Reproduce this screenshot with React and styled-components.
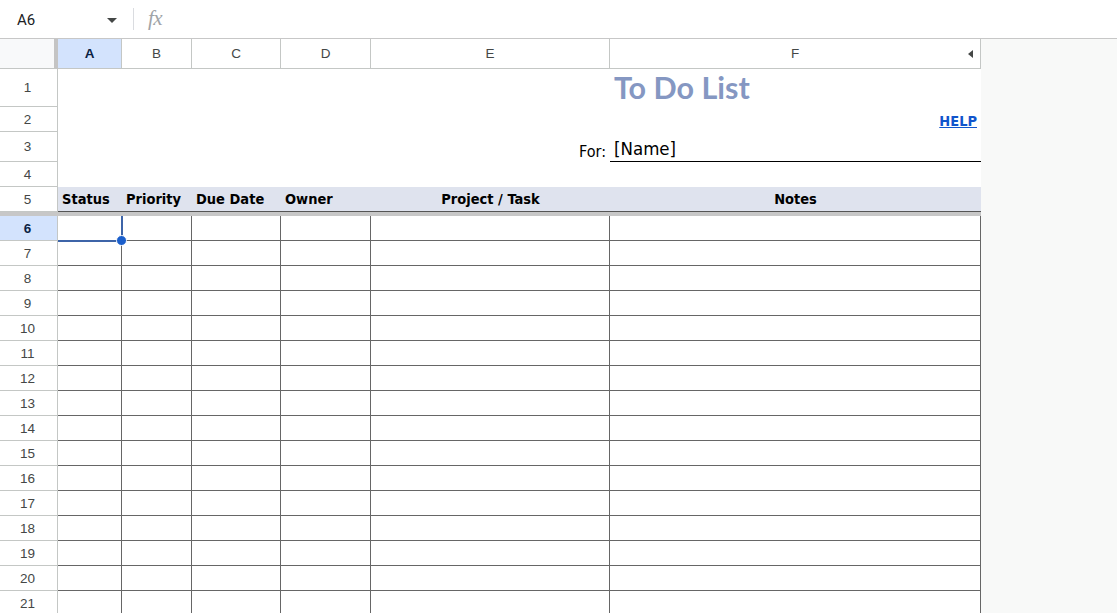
import React from "react";
import styled, { createGlobalStyle, css } from "styled-components";

const GlobalStyle = createGlobalStyle`
  html, body {
    margin: 0;
    padding: 0;
    background: #ffffff;
    overflow: hidden;
  }
  body {
    font-family: "Liberation Sans", Arial, sans-serif;
  }
  * {
    box-sizing: border-box;
  }
`;

const COLS = [
  { key: "A", width: 64 },
  { key: "B", width: 70 },
  { key: "C", width: 89 },
  { key: "D", width: 90 },
  { key: "E", width: 239 },
  { key: "F", width: 371 },
];

const TEMPLATE = `58px ${COLS.map((c) => c.width + "px").join(" ")} 1fr`;

const HEADERS = ["Status", "Priority", "Due Date", "Owner", "Project / Task", "Notes"];

const DATA_ROWS = Array.from({ length: 16 }, (_, i) => i + 6);

function App() {
  return (
    <>
      <GlobalStyle />
      <Page>
        <FormulaBar>
          <NameBox>
            <CellRef>A6</CellRef>
            <Caret />
          </NameBox>
          <Divider />
          <Fx>fx</Fx>
        </FormulaBar>

        <Row $height={30}>
          <Corner />
          {COLS.map((c) => (
            <ColHead key={c.key} $active={c.key === "A"}>
              {c.key}
              {c.key === "F" && <CollapseArrow />}
            </ColHead>
          ))}
          <Gutter />
        </Row>

        <Row $height={38}>
          <RowHead>1</RowHead>
          <Blank $span={5} />
          <Cell>
            <Title>To Do List</Title>
          </Cell>
          <Gutter />
        </Row>

        <Row $height={25}>
          <RowHead>2</RowHead>
          <Blank $span={5} />
          <Cell $align="flex-end">
            <HelpLink href="#">HELP</HelpLink>
          </Cell>
          <Gutter />
        </Row>

        <Row $height={30}>
          <RowHead>3</RowHead>
          <Blank $span={4} />
          <Cell $align="flex-end" $valign="flex-end">
            <ForLabel>For:</ForLabel>
          </Cell>
          <NameCell>
            <NameText>[Name]</NameText>
          </NameCell>
          <Gutter />
        </Row>

        <Row $height={25}>
          <RowHead>4</RowHead>
          <Blank $span={6} />
          <Gutter />
        </Row>

        <Row $height={25}>
          <RowHead>5</RowHead>
          {HEADERS.map((h, i) => (
            <HeadCell key={h} $center={i >= 4}>
              {h}
            </HeadCell>
          ))}
          <Gutter />
        </Row>

        <FreezeRow>
          <FreezeBand />
          <Gutter />
        </FreezeRow>

        {DATA_ROWS.map((r) => (
          <Row key={r} $height={25}>
            <RowHead $active={r === 6}>{r}</RowHead>
            {COLS.map((c) => {
              const selected = r === 6 && c.key === "A";
              return (
                <DataCell key={c.key} $raised={selected}>
                  {selected && (
                    <Selection>
                      <Handle />
                    </Selection>
                  )}
                </DataCell>
              );
            })}
            <Gutter />
          </Row>
        ))}
      </Page>
    </>
  );
}

const Page = styled.div`
  width: 1117px;
  height: 613px;
  overflow: hidden;
  display: flex;
  flex-direction: column;
  background: #ffffff;
`;

const FormulaBar = styled.div`
  flex: none;
  height: 39px;
  display: flex;
  align-items: center;
  border-bottom: 1px solid #c7c7c7;
  background: #ffffff;
`;

const NameBox = styled.div`
  width: 125px;
  display: flex;
  align-items: center;
  justify-content: space-between;
  padding: 2px 8px 0 17px;
`;

const CellRef = styled.span`
  font-family: Roboto, "Liberation Sans", sans-serif;
  font-size: 15px;
  color: #202124;
`;

const Caret = styled.span`
  width: 0;
  height: 0;
  border-left: 5px solid transparent;
  border-right: 5px solid transparent;
  border-top: 5px solid #444746;
`;

const Divider = styled.span`
  width: 1px;
  height: 22px;
  background: #dadce0;
  margin-left: 8px;
`;

const Fx = styled.span`
  font-family: "Liberation Serif", serif;
  font-style: italic;
  font-size: 21px;
  color: #a0a4a8;
  margin-left: 14px;
  margin-top: -1px;
  letter-spacing: -0.5px;
`;

const Row = styled.div`
  flex: none;
  display: grid;
  grid-template-columns: ${TEMPLATE};
  height: ${(p) => p.$height}px;
`;

const FreezeRow = styled.div`
  flex: none;
  display: grid;
  grid-template-columns: 981px 1fr;
  height: 4px;
`;

const FreezeBand = styled.div`
  background: #c7c7c7;
`;

const Gutter = styled.div`
  background: #f8f9f8;
`;

const Corner = styled.div`
  background: #f8f9fa;
  border-right: 4px solid #c4c4c4;
  border-bottom: 1px solid #c4c7c5;
`;

const labelFont = css`
  font-family: "Liberation Sans", Arial, sans-serif;
  font-size: 13.5px;
  color: #444746;
`;

const ColHead = styled.div`
  ${labelFont}
  position: relative;
  display: flex;
  align-items: center;
  justify-content: center;
  border-right: 1px solid #c4c7c5;
  border-bottom: 1px solid #c4c7c5;
  background: ${(p) => (p.$active ? "#d3e3fd" : "#ffffff")};
  font-weight: ${(p) => (p.$active ? 700 : 400)};
  color: ${(p) => (p.$active ? "#0b1f44" : "#444746")};
`;

const CollapseArrow = styled.span`
  position: absolute;
  right: 7px;
  top: 50%;
  margin-top: -4px;
  width: 0;
  height: 0;
  border-top: 4px solid transparent;
  border-bottom: 4px solid transparent;
  border-right: 5px solid #444746;
`;

const RowHead = styled.div`
  ${labelFont}
  display: flex;
  align-items: center;
  justify-content: center;
  padding-right: 2px;
  border-right: 1px solid #c4c7c5;
  border-bottom: 1px solid #c4c7c5;
  background: ${(p) => (p.$active ? "#d3e3fd" : "#ffffff")};
  font-weight: ${(p) => (p.$active ? 700 : 400)};
  color: ${(p) => (p.$active ? "#0b1f44" : "#444746")};
`;

const Blank = styled.div`
  grid-column: span ${(p) => p.$span};
  background: #ffffff;
`;

const Cell = styled.div`
  display: flex;
  justify-content: ${(p) => p.$align || "flex-start"};
  align-items: ${(p) => p.$valign || "center"};
  padding: 0 4px;
  background: #ffffff;
  min-width: 0;
`;

const Title = styled.span`
  font-family: Lato, "Open Sans", sans-serif;
  font-weight: 700;
  font-size: 30.5px;
  color: #8597c2;
  margin-top: -2px;
`;

const HelpLink = styled.a`
  font-family: "DejaVu Sans Condensed", "DejaVu Sans", sans-serif;
  font-stretch: condensed;
  font-weight: 700;
  font-size: 14.5px;
  color: #1155cc;
  text-decoration: underline;
  margin-top: 2px;
`;

const ForLabel = styled.span`
  font-family: "DejaVu Sans Condensed", "DejaVu Sans", sans-serif;
  font-stretch: condensed;
  font-size: 16px;
  color: #000000;
  padding-bottom: 1px;
`;

const NameCell = styled.div`
  display: flex;
  align-items: flex-end;
  padding: 0 4px 2px;
  border-bottom: 1px solid #000000;
  background: #ffffff;
`;

const NameText = styled.span`
  font-family: "DejaVu Sans Condensed", "DejaVu Sans", sans-serif;
  font-stretch: condensed;
  font-size: 18.5px;
  color: #000000;
`;

const HeadCell = styled.div`
  display: flex;
  align-items: center;
  justify-content: ${(p) => (p.$center ? "center" : "flex-start")};
  padding: 0 4px;
  background: #dfe3ee;
  border-bottom: 1px solid #555555;
  font-family: "DejaVu Sans Condensed", "DejaVu Sans", sans-serif;
  font-stretch: condensed;
  font-weight: 700;
  font-size: 14.5px;
  color: #000000;
  white-space: nowrap;
`;

const DataCell = styled.div`
  position: relative;
  z-index: ${(p) => (p.$raised ? 2 : "auto")};
  background: #ffffff;
  border-right: 1px solid #666666;
  border-bottom: 1px solid #666666;
`;

const Selection = styled.div`
  position: absolute;
  top: 0;
  left: 0;
  right: -2px;
  bottom: -2px;
  border-right: 2px solid #3d64a8;
  border-bottom: 2px solid #3d64a8;
  pointer-events: none;
`;

const Handle = styled.span`
  position: absolute;
  right: -6px;
  bottom: -6px;
  width: 11px;
  height: 11px;
  border-radius: 50%;
  background: #1b5fcc;
  border: 1px solid #ffffff;
`;

export default App;
